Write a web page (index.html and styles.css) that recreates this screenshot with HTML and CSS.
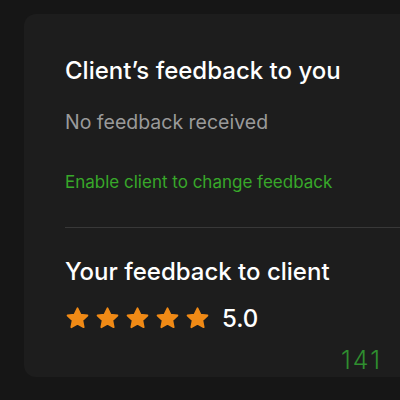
FILE: index.html
```html
<!DOCTYPE html>
<html lang="en">
<head>
    <meta charset="UTF-8">
    <meta name="viewport" content="width=device-width, initial-scale=1.0">
    <title>Feedback</title>
    <link rel="stylesheet" href="styles.css">
</head>
<body>

    <div class="card">
        <section class="block">
            <h2>Client’s feedback to you</h2>
            <p class="empty">No feedback received</p>
            <a class="action" href="#">Enable client to change feedback</a>
        </section>

        <hr class="divider">

        <section class="block">
            <h2>Your feedback to client</h2>
            <div class="rating">
                <div class="stars">
                    <svg class="star" viewBox="0 0 24 24"><path d="M12 2.2l2.9 6.1 6.6.8-4.9 4.6 1.3 6.6L12 17l-5.9 3.3 1.3-6.6-4.9-4.6 6.6-.8z"/></svg>
                    <svg class="star" viewBox="0 0 24 24"><path d="M12 2.2l2.9 6.1 6.6.8-4.9 4.6 1.3 6.6L12 17l-5.9 3.3 1.3-6.6-4.9-4.6 6.6-.8z"/></svg>
                    <svg class="star" viewBox="0 0 24 24"><path d="M12 2.2l2.9 6.1 6.6.8-4.9 4.6 1.3 6.6L12 17l-5.9 3.3 1.3-6.6-4.9-4.6 6.6-.8z"/></svg>
                    <svg class="star" viewBox="0 0 24 24"><path d="M12 2.2l2.9 6.1 6.6.8-4.9 4.6 1.3 6.6L12 17l-5.9 3.3 1.3-6.6-4.9-4.6 6.6-.8z"/></svg>
                    <svg class="star" viewBox="0 0 24 24"><path d="M12 2.2l2.9 6.1 6.6.8-4.9 4.6 1.3 6.6L12 17l-5.9 3.3 1.3-6.6-4.9-4.6 6.6-.8z"/></svg>
                </div>
                <span class="score">5.0</span>
            </div>
        </section>

        <div class="count">141</div>
    </div>

</body>
</html>
```

FILE: styles.css
```css
body {
    margin: 0;
    height: 400px;
    overflow: hidden;
    background-color: #161616;
    font-family: Inter, "Liberation Sans", sans-serif;
    padding: 14px 0 0 24px;
    box-sizing: border-box;
}
.card {
    background-color: #1d1d1d;
    border-radius: 12px 0 0 12px;
    height: 363px;
    padding: 42px 0 0 41px;
    box-sizing: border-box;
}
.block h2 {
    margin: 0;
    color: #fff;
    font-size: 24px;
    line-height: 30px;
    font-weight: 500;
}
.empty {
    margin: 24px 0 0;
    color: #9a9a9a;
    font-size: 19.5px;
    line-height: 24px;
}
.action {
    display: block;
    margin-top: 38px;
    color: #38a82a;
    font-size: 17px;
    line-height: 20px;
    text-decoration: none;
}
.divider {
    border: none;
    border-top: 1px solid #383838;
    margin: 35px 0 29px;
}
.rating {
    display: flex;
    align-items: center;
    gap: 12px;
    margin-top: 17px;
}
.stars {
    display: flex;
    gap: 5px;
}
.star {
    width: 25px;
    height: 25px;
    fill: #f08a16;
    stroke: #f08a16;
    stroke-width: 1.8;
    stroke-linejoin: round;
}
.score {
    color: #fff;
    font-size: 24px;
    font-weight: 500;
}
.count {
    text-align: right;
    padding-right: 18px;
    margin-top: 12px;
    color: #2f8f2f;
    font-size: 25px;
    letter-spacing: 2px;
    font-weight: 300;
}
```
